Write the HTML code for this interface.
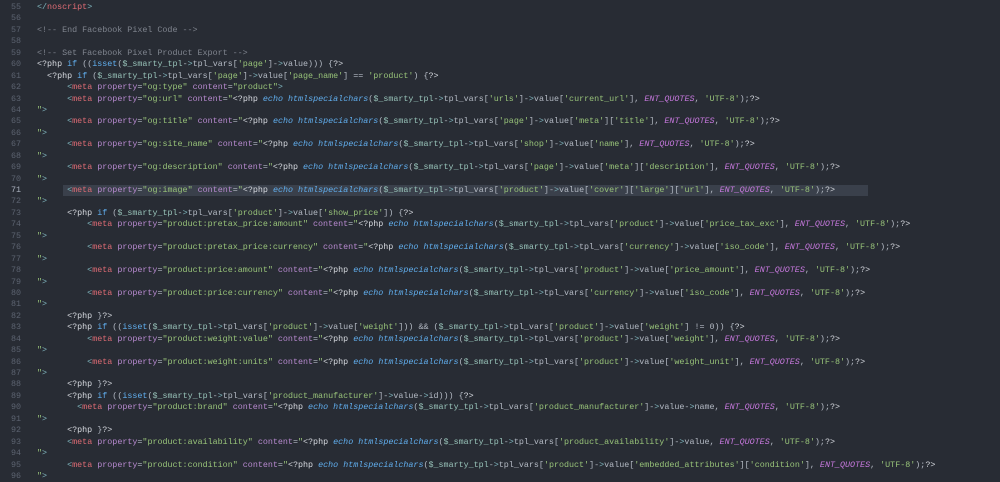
<!DOCTYPE html>
<html><head><meta charset="utf-8"><style>
html,body{margin:0;padding:0;background:#282c34;width:1000px;height:476px;overflow:hidden}
#ed{position:absolute;left:0;top:2px;font-family:"Liberation Mono",monospace;font-size:8.37px;}
.l{position:relative;height:11.45px;line-height:11.45px;white-space:pre;}
.n{position:absolute;left:0;width:21px;text-align:right;color:#5c6370;}
.c{position:absolute;left:37px;color:#b4bac4;}
.hl{position:absolute;left:63px;width:805px;top:0;height:11.45px;background:#3a404b;}
.cm{color:#7f848e}.php{color:#d7dae0}.g{color:#7fb5bd}.t{color:#e06c75}.a{color:#b88ad0}
.s{color:#98c379}.k{color:#61afef;font-style:italic}.kw{color:#61afef}.ct{color:#c678dd;font-style:italic}
.v{color:#98c3b9}
</style></head><body><div id="ed"></div>
<script>
var P="<?php echo htmlspecialchars($_smarty_tpl->tpl_vars[";
function m(ind,prop,rest){return " ".repeat(ind)+'<meta property="'+prop+'" content="'+P+rest+", ENT_QUOTES, 'UTF-8');?>";}
var L=[
"</noscript>","","<!-- End Facebook Pixel Code -->","","<!-- Set Facebook Pixel Product Export -->",
"<?php if ((isset($_smarty_tpl->tpl_vars['page']->value))) {?>",
"  <?php if ($_smarty_tpl->tpl_vars['page']->value['page_name'] == 'product') {?>",
'      <meta property="og:type" content="product">',
m(6,"og:url","'urls']->value['current_url']"),'">',
m(6,"og:title","'page']->value['meta']['title']"),'">',
m(6,"og:site_name","'shop']->value['name']"),'">',
m(6,"og:description","'page']->value['meta']['description']"),'">',
m(6,"og:image","'product']->value['cover']['large']['url']"),'">',
"      <?php if ($_smarty_tpl->tpl_vars['product']->value['show_price']) {?>",
m(10,"product:pretax_price:amount","'product']->value['price_tax_exc']"),'">',
m(10,"product:pretax_price:currency","'currency']->value['iso_code']"),'">',
m(10,"product:price:amount","'product']->value['price_amount']"),'">',
m(10,"product:price:currency","'currency']->value['iso_code']"),'">',
"      <?php }?>",
"      <?php if ((isset($_smarty_tpl->tpl_vars['product']->value['weight'])) && ($_smarty_tpl->tpl_vars['product']->value['weight'] != 0)) {?>",
m(10,"product:weight:value","'product']->value['weight']"),'">',
m(10,"product:weight:units","'product']->value['weight_unit']"),'">',
"      <?php }?>",
"      <?php if ((isset($_smarty_tpl->tpl_vars['product_manufacturer']->value->id))) {?>",
m(8,"product:brand","'product_manufacturer']->value->name"),'">',
"      <?php }?>",
m(6,"product:availability","'product_availability']->value"),'">',
m(6,"product:condition","'product']->value['embedded_attributes']['condition']"),'">'
];
function esc(s){return s.replace(/&/g,"&amp;").replace(/</g,"&lt;").replace(/>/g,"&gt;");}
var re=/(<!--.*?-->)|(<\?php|\?>)|(<\/?)([a-z]+)|("[^"<]*"|")|('[^']*')|(\$_smarty_tpl)|(\b(?:echo|htmlspecialchars)\b)|(\b(?:if|isset)\b)|(ENT_QUOTES)|(\bproperty\b|\bcontent\b)|(>)/g;
function hl(s){var o="",i=0,x;re.lastIndex=0;
while((x=re.exec(s))){o+=esc(s.slice(i,x.index));i=re.lastIndex;
if(x[1])o+='<span class="cm">'+esc(x[1])+'</span>';
else if(x[2])o+='<span class="php">'+esc(x[2])+'</span>';
else if(x[3])o+='<span class="g">'+esc(x[3])+'</span><span class="t">'+x[4]+'</span>';
else if(x[5])o+='<span class="s">'+esc(x[5])+'</span>';
else if(x[6])o+='<span class="s">'+esc(x[6])+'</span>';
else if(x[7])o+='<span class="v">'+x[7]+'</span>';
else if(x[8])o+='<span class="k">'+x[8]+'</span>';
else if(x[9])o+='<span class="kw">'+x[9]+'</span>';
else if(x[10])o+='<span class="ct">'+x[10]+'</span>';
else if(x[11])o+='<span class="a">'+x[11]+'</span>';
else o+='<span class="g">&gt;</span>';}
return o+esc(s.slice(i));}
var h="";
for(var k=0;k<L.length;k++){var num=55+k;
h+='<div class="l">'+(num==71?'<div class="hl"></div>':'')+'<span class="n"'+(num==71?' style="color:#abb2bf"':'')+'>'+num+'</span><span class="c">'+hl(L[k])+'</span></div>';}
document.getElementById("ed").innerHTML=h;
</script></body></html>
